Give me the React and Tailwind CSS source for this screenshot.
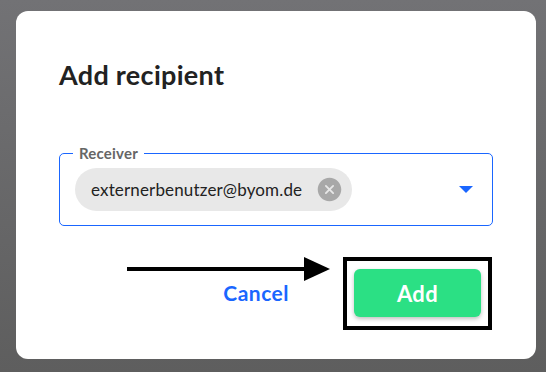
import { IoCloseCircle } from 'react-icons/io5';

export default function App() {
  return (
    <div
      className="w-[546px] h-[372px] overflow-hidden bg-gradient-to-b from-[#727275] to-[#5e5e5e] pt-[11px] pl-[16px]"
      style={{ fontFamily: 'Lato, "Noto Sans", sans-serif' }}
    >
      <div className="relative w-[520px] h-[348px] rounded-[12px] bg-white px-[43px] pt-[48px]">
        <h2 className="text-[27px] leading-[32px] font-bold text-[#222222] tracking-[0.3px]">Add recipient</h2>

        {/* Receiver select */}
        <div className="relative mt-[62px] h-[73px] rounded-[5px] border border-[#1a66ff] flex items-center pl-[15px] pr-[19px]">
          <span className="absolute -top-[10px] left-[13px] bg-white px-[6px] text-[15px] leading-[18px] font-bold text-[#666666] tracking-[0.2px]">
            Receiver
          </span>
          <div className="h-[43px] rounded-full bg-[#e8e8e8] flex items-center pl-[16px] pr-[8px] gap-[13px]">
            <span className="text-[17px] text-[#222222] tracking-[0.15px]">externerbenutzer@byom.de</span>
            <IoCloseCircle className="w-[29px] h-[29px] text-[#a8a8a8]" />
          </div>
          <div className="ml-auto w-0 h-0 border-l-[7px] border-r-[7px] border-t-[7px] border-l-transparent border-r-transparent border-t-[#1a66ff]" />
        </div>

        {/* Actions */}
        <div className="mt-[31px] flex items-center justify-end pr-[1px]">
          <button className="mr-[54px] mt-[-2px] text-[21px] font-bold text-[#1a66ff] tracking-[0.5px]">Cancel</button>
          <div className="border-4 border-black pt-2 pb-[9px] px-[7px]">
            <button className="w-[127px] h-[48px] rounded-[6px] bg-[#2be084] text-white text-[22px] font-bold tracking-[0.4px] shadow-[0_2px_4px_rgba(0,0,0,0.25)]">
              Add
            </button>
          </div>
        </div>

        {/* Annotation arrow */}
        <svg className="absolute left-[111px] top-[246px]" width="203" height="24" viewBox="0 0 203 24">
          <rect x="0" y="10" width="180" height="4" fill="#000" />
          <polygon points="177,0 203,12 177,24" fill="#000" />
        </svg>
      </div>
    </div>
  );
}
